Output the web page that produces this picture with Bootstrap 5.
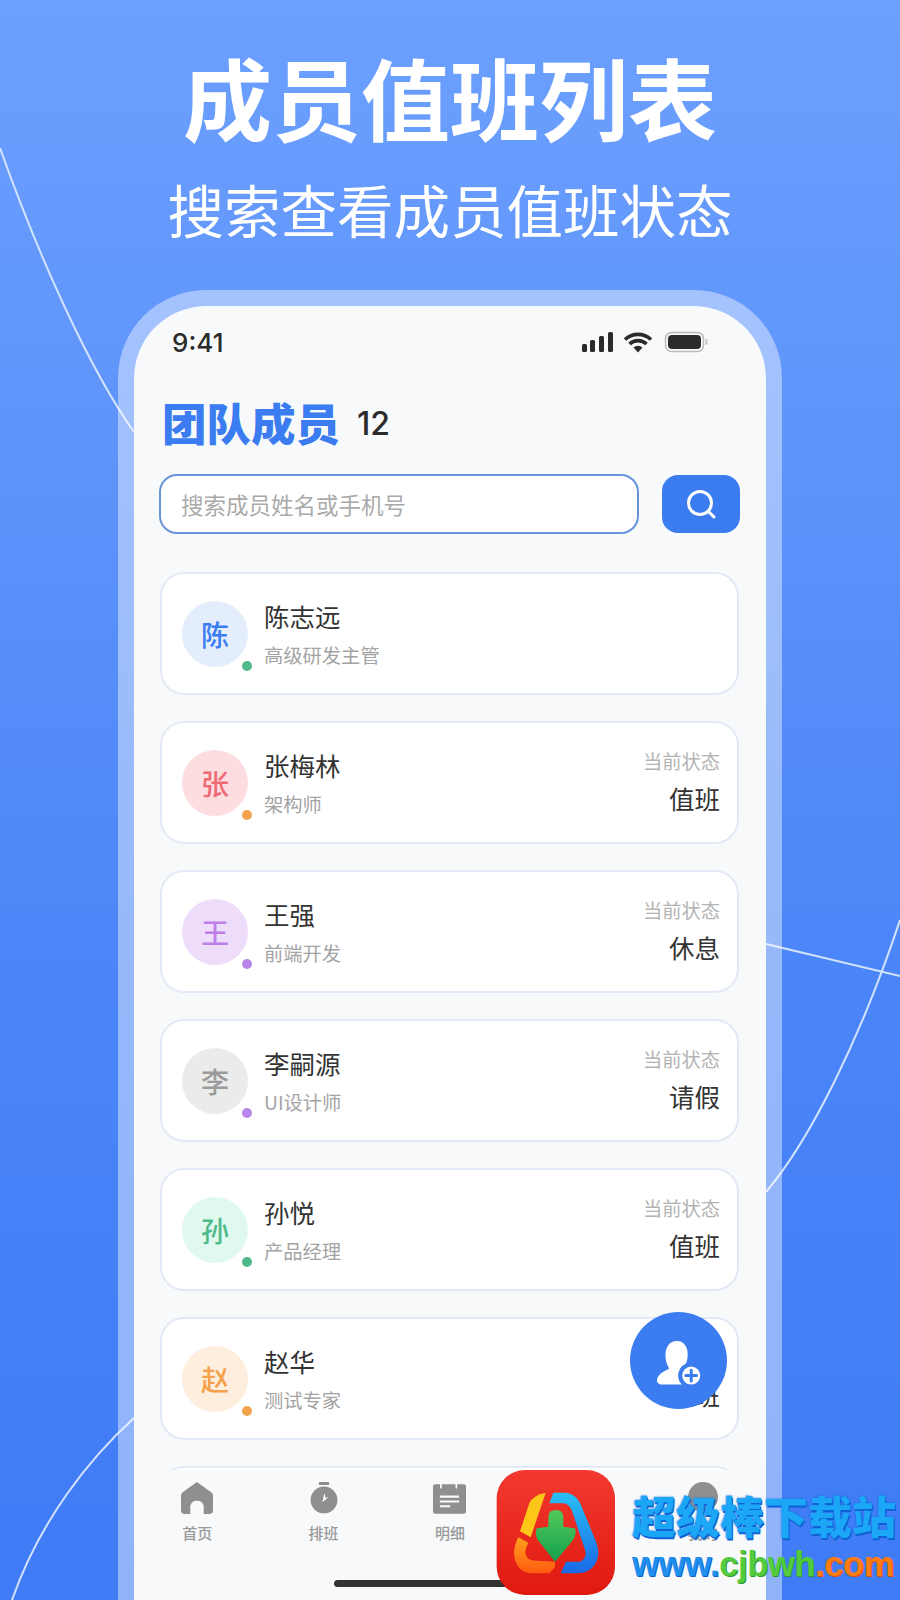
<!DOCTYPE html>
<html lang="zh-CN">
<head>
  <meta charset="UTF-8">
  <meta name="viewport" content="width=device-width, initial-scale=1.0">
  <title>成员值班列表</title>
  <link href="https://cdn.jsdelivr.net/npm/bootstrap@5.3.0/dist/css/bootstrap.min.css" rel="stylesheet">
  <style>
    body {
      font-family: "Noto Sans CJK SC", "Liberation Sans", sans-serif;
      color: #333;
      background: #3f7bf5;
    }
    .poster {
      position: relative;
      width: 900px;
      height: 1600px;
      overflow: hidden;
      background: linear-gradient(180deg, #6ca0ff 0%, #6297fb 20%, #4a85f8 62%, #3f7bf5 100%);
    }
    .bg-lines {
      position: absolute;
      inset: 0;
    }
    .hero {
      position: relative;
      height: 290px;
      color: #fff;
      text-align: center;
    }
    .hero-title {
      margin: 0;
      padding-top: 41px;
      font-size: 89px;
      line-height: 110px;
      font-weight: 700;
    }
    .hero-sub {
      margin: 0;
      padding-top: 22px;
      font-size: 56.500px;
      line-height: 70px;
      font-weight: 400;
    }
    .phone {
      position: relative;
      width: 664px;
      height: 1310px;
      margin-left: 118px;
      border: 16px solid rgba(255, 255, 255, .42);
      border-bottom: 0;
      border-radius: 88px 88px 0 0;
      background-clip: padding-box;
      background-color: #f8f9fa;
      overflow: hidden;
      padding: 16px 26px 0 25px;
    }
    .status-row {
      height: 40px;
      padding: 0 32px 0 13px;
    }
    .clock {
      font-family: Inter, "Liberation Sans", sans-serif;
      font-size: 26px;
      font-weight: 500;
      color: #2b2b2b;
    }
    .title-row {
      height: 60px;
      margin-top: 30px;
      padding-left: 3px;
    }
    .team-title {
      margin: 0;
      font-size: 44.500px;
      line-height: 60px;
      font-weight: 900;
      color: #3b7df0;
    }
    .team-count {
      margin-left: 17px;
      padding-top: 4px;
      font-family: Inter, "Liberation Sans", sans-serif;
      font-size: 32px;
      font-weight: 500;
      color: #2b2b2b;
    }
    .search-row {
      margin-top: 22px;
      gap: 23px;
    }
    .search-input.form-control {
      width: 480px;
      height: 60px;
      padding: 0 20px;
      font-size: 22.500px;
      border: 2px solid #6a94d8;
      border-radius: 18px;
      background: #fff;
    }
    .search-input::placeholder {
      color: #aaa;
    }
    .search-btn.btn {
      width: 78px;
      height: 58px;
      margin-top: 1px;
      padding: 0;
      border: 0;
      border-radius: 16px;
      background: #3b7df0;
    }
    .members {
      margin: 38px 1px 0 1px;
      gap: 26px;
    }
    .member.card {
      flex: none;
      height: 123px;
      flex-direction: row;
      align-items: center;
      padding: 0 17px 0 20px;
      border: 2px solid #e3e9f6;
      border-radius: 24px;
      background: #fff;
    }
    .avatar {
      position: relative;
      flex: none;
      width: 66px;
      height: 66px;
      border-radius: 50%;
      font-size: 28px;
      font-weight: 500;
      margin-right: 16px;
    }
    .presence {
      position: absolute;
      right: -4px;
      bottom: -4px;
      width: 10px;
      height: 10px;
      border-radius: 50%;
    }
    .member-name {
      font-size: 25.500px;
      line-height: 34px;
      color: #333;
    }
    .member-role {
      margin-top: 8px;
      font-size: 19.300px;
      line-height: 28px;
      color: #a3a3a3;
    }
    .duty {
      margin-bottom: 3px;
    }
    .duty-label {
      font-size: 19.300px;
      line-height: 28px;
      color: #b3b3b3;
    }
    .duty-value {
      margin-top: 6px;
      font-size: 25.500px;
      line-height: 34px;
      color: #333;
    }
    .fab {
      position: absolute;
      left: 630px;
      top: 1312px;
      width: 97px;
      height: 97px;
      border-radius: 50%;
      background: #3b7df0;
    }
    .tabbar {
      position: absolute;
      left: 0;
      right: 0;
      bottom: 0;
      top: 1164px;
      background: #f8f9fa;
    }
    .tab {
      width: 126.400px;
      padding-top: 12px;
      font-size: 15px;
      line-height: 20px;
      font-weight: 500;
      color: #999;
    }
    .tab svg {
      display: block;
      height: 32px;
      margin-bottom: 9px;
    }
    .home-bar {
      position: absolute;
      left: 200px;
      bottom: 13px;
      width: 232px;
      height: 7px;
      border-radius: 4px;
      background: #333;
    }
    .wm-logo {
      position: absolute;
      left: 490px;
      top: 1460px;
    }
    .wm-text {
      position: absolute;
      left: 632px;
      top: 1486px;
      width: 268px;
      font-weight: 900;
      white-space: nowrap;
    }
    .wm-cn {
      font-size: 44px;
      line-height: 58px;
      color: #1ba6f6;
      text-shadow: 1px 2px 0 #0f62d6, 0 0 2px #0f62d6;
    }
    .wm-url {
      margin-top: -1px;
      font-family: "Liberation Sans", sans-serif;
      font-size: 34.500px;
      line-height: 42px;
      letter-spacing: -.4px;
      color: #1f8fee;
      text-shadow: 1px 1px 0 #0f62d6;
    }
    .wm-green {
      color: #52cc3e;
      text-shadow: 1px 1px 0 #2a9a2a;
    }
    .wm-orange {
      color: #ff7c12;
      text-shadow: 1px 1px 0 #d9500a;
    }
    .av-chen { background: #e3edfc; color: #3b7df0; }
    .av-zhang { background: #fddde0; color: #ee6a75; }
    .av-wang { background: #eedcfb; color: #bf7fe8; }
    .av-li { background: #ebebeb; color: #9a9a9a; }
    .av-sun { background: #e0f9ef; color: #4fba8a; }
    .av-zhao { background: #fdeedd; color: #f5a04a; }
    .dot-green { background: #4fb98a; }
    .dot-orange { background: #f3a24e; }
    .dot-purple { background: #b985e8; }
  </style>
</head>
<body>
  <div class="poster">
    <svg class="bg-lines" width="900" height="1600" viewBox="0 0 900 1600" fill="none" stroke="#d3e2ff" stroke-width="2">
      <path d="M0 148C40 260 90 370 134 432"/>
      <path d="M766 944L900 976"/>
      <path d="M766 1192C810 1140 860 1040 900 920"/>
      <path d="M134 1418C90 1458 40 1520 12 1600"/>
    </svg>

    <div class="hero">
      <h1 class="hero-title">成员值班列表</h1>
      <p class="hero-sub">搜索查看成员值班状态</p>
    </div>

    <div class="phone">
      <div class="status-row d-flex align-items-center justify-content-between">
        <span class="clock">9:41</span>
        <svg width="126" height="24" viewBox="0 0 126 24">
          <rect x="0" y="14" width="5" height="8" rx="1.5" fill="#2b2b2b"/>
          <rect x="8" y="10" width="5" height="12" rx="1.5" fill="#2b2b2b"/>
          <rect x="17" y="6" width="5" height="16" rx="1.5" fill="#2b2b2b"/>
          <rect x="26" y="2" width="5" height="20" rx="1.5" fill="#2b2b2b"/>
          <path d="M43 9.5a19 19 0 0 1 26 0M47.500 14a12.500 12.500 0 0 1 17 0" fill="none" stroke="#2b2b2b" stroke-width="3.600"/>
          <path d="M51.500 17.500a7 7 0 0 1 9 0L56 22.500Z" fill="#2b2b2b"/>
          <rect x="83.500" y="2.500" width="38" height="19" rx="6" fill="none" stroke="#b9b9b9" stroke-width="1.500"/>
          <rect x="86" y="5" width="33" height="14" rx="4" fill="#2b2b2b"/>
          <rect x="123.500" y="9" width="2" height="6" rx="1" fill="#c4c4c4"/>
        </svg>
      </div>

      <div class="title-row d-flex align-items-center">
        <h2 class="team-title">团队成员</h2>
        <span class="team-count">12</span>
      </div>

      <div class="search-row d-flex">
        <input type="text" class="search-input form-control shadow-none" placeholder="搜索成员姓名或手机号">
        <button type="button" class="search-btn btn d-flex align-items-center justify-content-center">
          <svg width="32" height="32" viewBox="0 0 32 32" fill="none" stroke="#fff" stroke-width="3" stroke-linecap="round">
            <circle cx="15" cy="15" r="11.500"/>
            <path d="M23.500 23.500L29 29"/>
          </svg>
        </button>
      </div>

      <div class="members d-flex flex-column">
        <div class="member card">
          <div class="avatar d-flex align-items-center justify-content-center av-chen">陈<span class="presence dot-green"></span></div>
          <div>
            <div class="member-name">陈志远</div>
            <div class="member-role">高级研发主管</div>
          </div>
        </div>
        <div class="member card">
          <div class="avatar d-flex align-items-center justify-content-center av-zhang">张<span class="presence dot-orange"></span></div>
          <div>
            <div class="member-name">张梅林</div>
            <div class="member-role">架构师</div>
          </div>
          <div class="duty ms-auto text-end">
            <div class="duty-label">当前状态</div>
            <div class="duty-value">值班</div>
          </div>
        </div>
        <div class="member card">
          <div class="avatar d-flex align-items-center justify-content-center av-wang">王<span class="presence dot-purple"></span></div>
          <div>
            <div class="member-name">王强</div>
            <div class="member-role">前端开发</div>
          </div>
          <div class="duty ms-auto text-end">
            <div class="duty-label">当前状态</div>
            <div class="duty-value">休息</div>
          </div>
        </div>
        <div class="member card">
          <div class="avatar d-flex align-items-center justify-content-center av-li">李<span class="presence dot-purple"></span></div>
          <div>
            <div class="member-name">李嗣源</div>
            <div class="member-role">UI设计师</div>
          </div>
          <div class="duty ms-auto text-end">
            <div class="duty-label">当前状态</div>
            <div class="duty-value">请假</div>
          </div>
        </div>
        <div class="member card">
          <div class="avatar d-flex align-items-center justify-content-center av-sun">孙<span class="presence dot-green"></span></div>
          <div>
            <div class="member-name">孙悦</div>
            <div class="member-role">产品经理</div>
          </div>
          <div class="duty ms-auto text-end">
            <div class="duty-label">当前状态</div>
            <div class="duty-value">值班</div>
          </div>
        </div>
        <div class="member card">
          <div class="avatar d-flex align-items-center justify-content-center av-zhao">赵<span class="presence dot-orange"></span></div>
          <div>
            <div class="member-name">赵华</div>
            <div class="member-role">测试专家</div>
          </div>
          <div class="duty ms-auto text-end">
            <div class="duty-label">当前状态</div>
            <div class="duty-value">值班</div>
          </div>
        </div>
        <div class="member card"></div>
      </div>

      <div class="tabbar d-flex">
        <div class="tab d-flex flex-column align-items-center">
          <svg width="32" height="32" viewBox="0 0 93 93"><path fill="#8f8f8f" d="M46 0L88 30Q93 34 93 40V82Q93 93 82 93H66V70A20 20 0 0 0 27 70V93H11Q0 93 0 82V40Q0 34 5 30Z"/></svg>
          首页
        </div>
        <div class="tab d-flex flex-column align-items-center">
          <svg width="30" height="32" viewBox="0 0 90 100"><rect x="29" y="0" width="32" height="9" rx="2" fill="#8f8f8f"/><circle cx="45" cy="56" r="42" fill="#8f8f8f"/><path fill="#fff" d="M46 35L40 63L60 46L50 50Z"/></svg>
          排班
        </div>
        <div class="tab d-flex flex-column align-items-center">
          <svg width="33" height="32" viewBox="0 0 96 92"><path fill="#8f8f8f" d="M6 6H90Q96 6 96 12V86Q96 92 90 92H6Q0 92 0 86V12Q0 6 6 6Z"/><path d="M23 1V16M68 1V16" stroke="#fafafa" stroke-width="5" stroke-linecap="round"/><path d="M20 42H76M20 56H76M20 70H50" stroke="#fafafa" stroke-width="6"/></svg>
          明细
        </div>
        <div class="tab"></div>
        <div class="tab d-flex flex-column align-items-center">
          <svg width="30" height="32" viewBox="0 0 30 32"><circle cx="15" cy="15" r="15" fill="#8f8f8f"/></svg>
          我的
        </div>
      </div>
      <div class="home-bar"></div>
    </div>

    <div class="fab d-flex align-items-center justify-content-center">
      <svg width="97" height="97" viewBox="15 15 290 290">
        <path fill="#fff" d="M155 102C180 102 190 125 187 150C185 170 176 180 172 188L172 232H112C98 232 92 222 98 210C106 195 125 190 132 184C128 176 122 165 121 148C120 122 132 102 155 102Z"/>
        <circle cx="198" cy="205" r="39" fill="#3b7df0"/>
        <circle cx="198" cy="205" r="27" fill="#fff"/>
        <path d="M198 189V221M182 205H214" stroke="#3b7df0" stroke-width="9" stroke-linecap="round"/>
      </svg>
    </div>

    <!-- watermark -->
    <svg class="wm-logo" width="140" height="140" viewBox="0 0 420 420">
      <defs>
        <linearGradient id="wmRed" x1="0" y1="0" x2="0" y2="1"><stop offset="0" stop-color="#f2392f"/><stop offset="1" stop-color="#e0190f"/></linearGradient>
        <linearGradient id="wmOrange" x1="0" y1="0" x2="0" y2="1"><stop offset="0" stop-color="#ffa01c"/><stop offset="1" stop-color="#ff5a10"/></linearGradient>
        <linearGradient id="wmBlue" x1="0" y1="0" x2="0" y2="1"><stop offset="0" stop-color="#28c0f4"/><stop offset="1" stop-color="#1a68e6"/></linearGradient>
        <linearGradient id="wmGreen" x1="0" y1="0" x2="0" y2="1"><stop offset="0" stop-color="#54c85a"/><stop offset="1" stop-color="#14a04e"/></linearGradient>
      </defs>
      <rect x="20" y="30" width="355" height="375" rx="85" fill="url(#wmRed)"/>
      <path fill="#ffc61a" d="M167 98L122 232L90 214L118 130Q130 104 167 98Z"/>
      <path fill="url(#wmOrange)" d="M85 232L115 248Q100 275 110 290Q118 302 140 302L195 305V322L178 340H120Q85 336 75 300Q66 268 85 232Z"/>
      <path fill="url(#wmBlue)" d="M190 98H225Q260 100 275 140L320 250Q335 295 305 325Q290 340 260 340H212L228 305H270Q292 296 285 270L245 150Q235 130 220 130H178Z"/>
      <path fill="url(#wmGreen)" d="M175 172Q175 150 197 150Q220 150 220 172V200L255 205Q262 225 245 245L195 305L142 238Q134 220 140 205L175 200Z"/>
    </svg>
    <div class="wm-text">
      <div class="wm-cn">超级棒下载站</div>
      <div class="wm-url">www.<span class="wm-green">cjbwh</span><span class="wm-orange">.com</span></div>
    </div>
  </div>

  <script src="https://cdn.jsdelivr.net/npm/bootstrap@5.3.0/dist/js/bootstrap.bundle.min.js"></script>
</body>
</html>
